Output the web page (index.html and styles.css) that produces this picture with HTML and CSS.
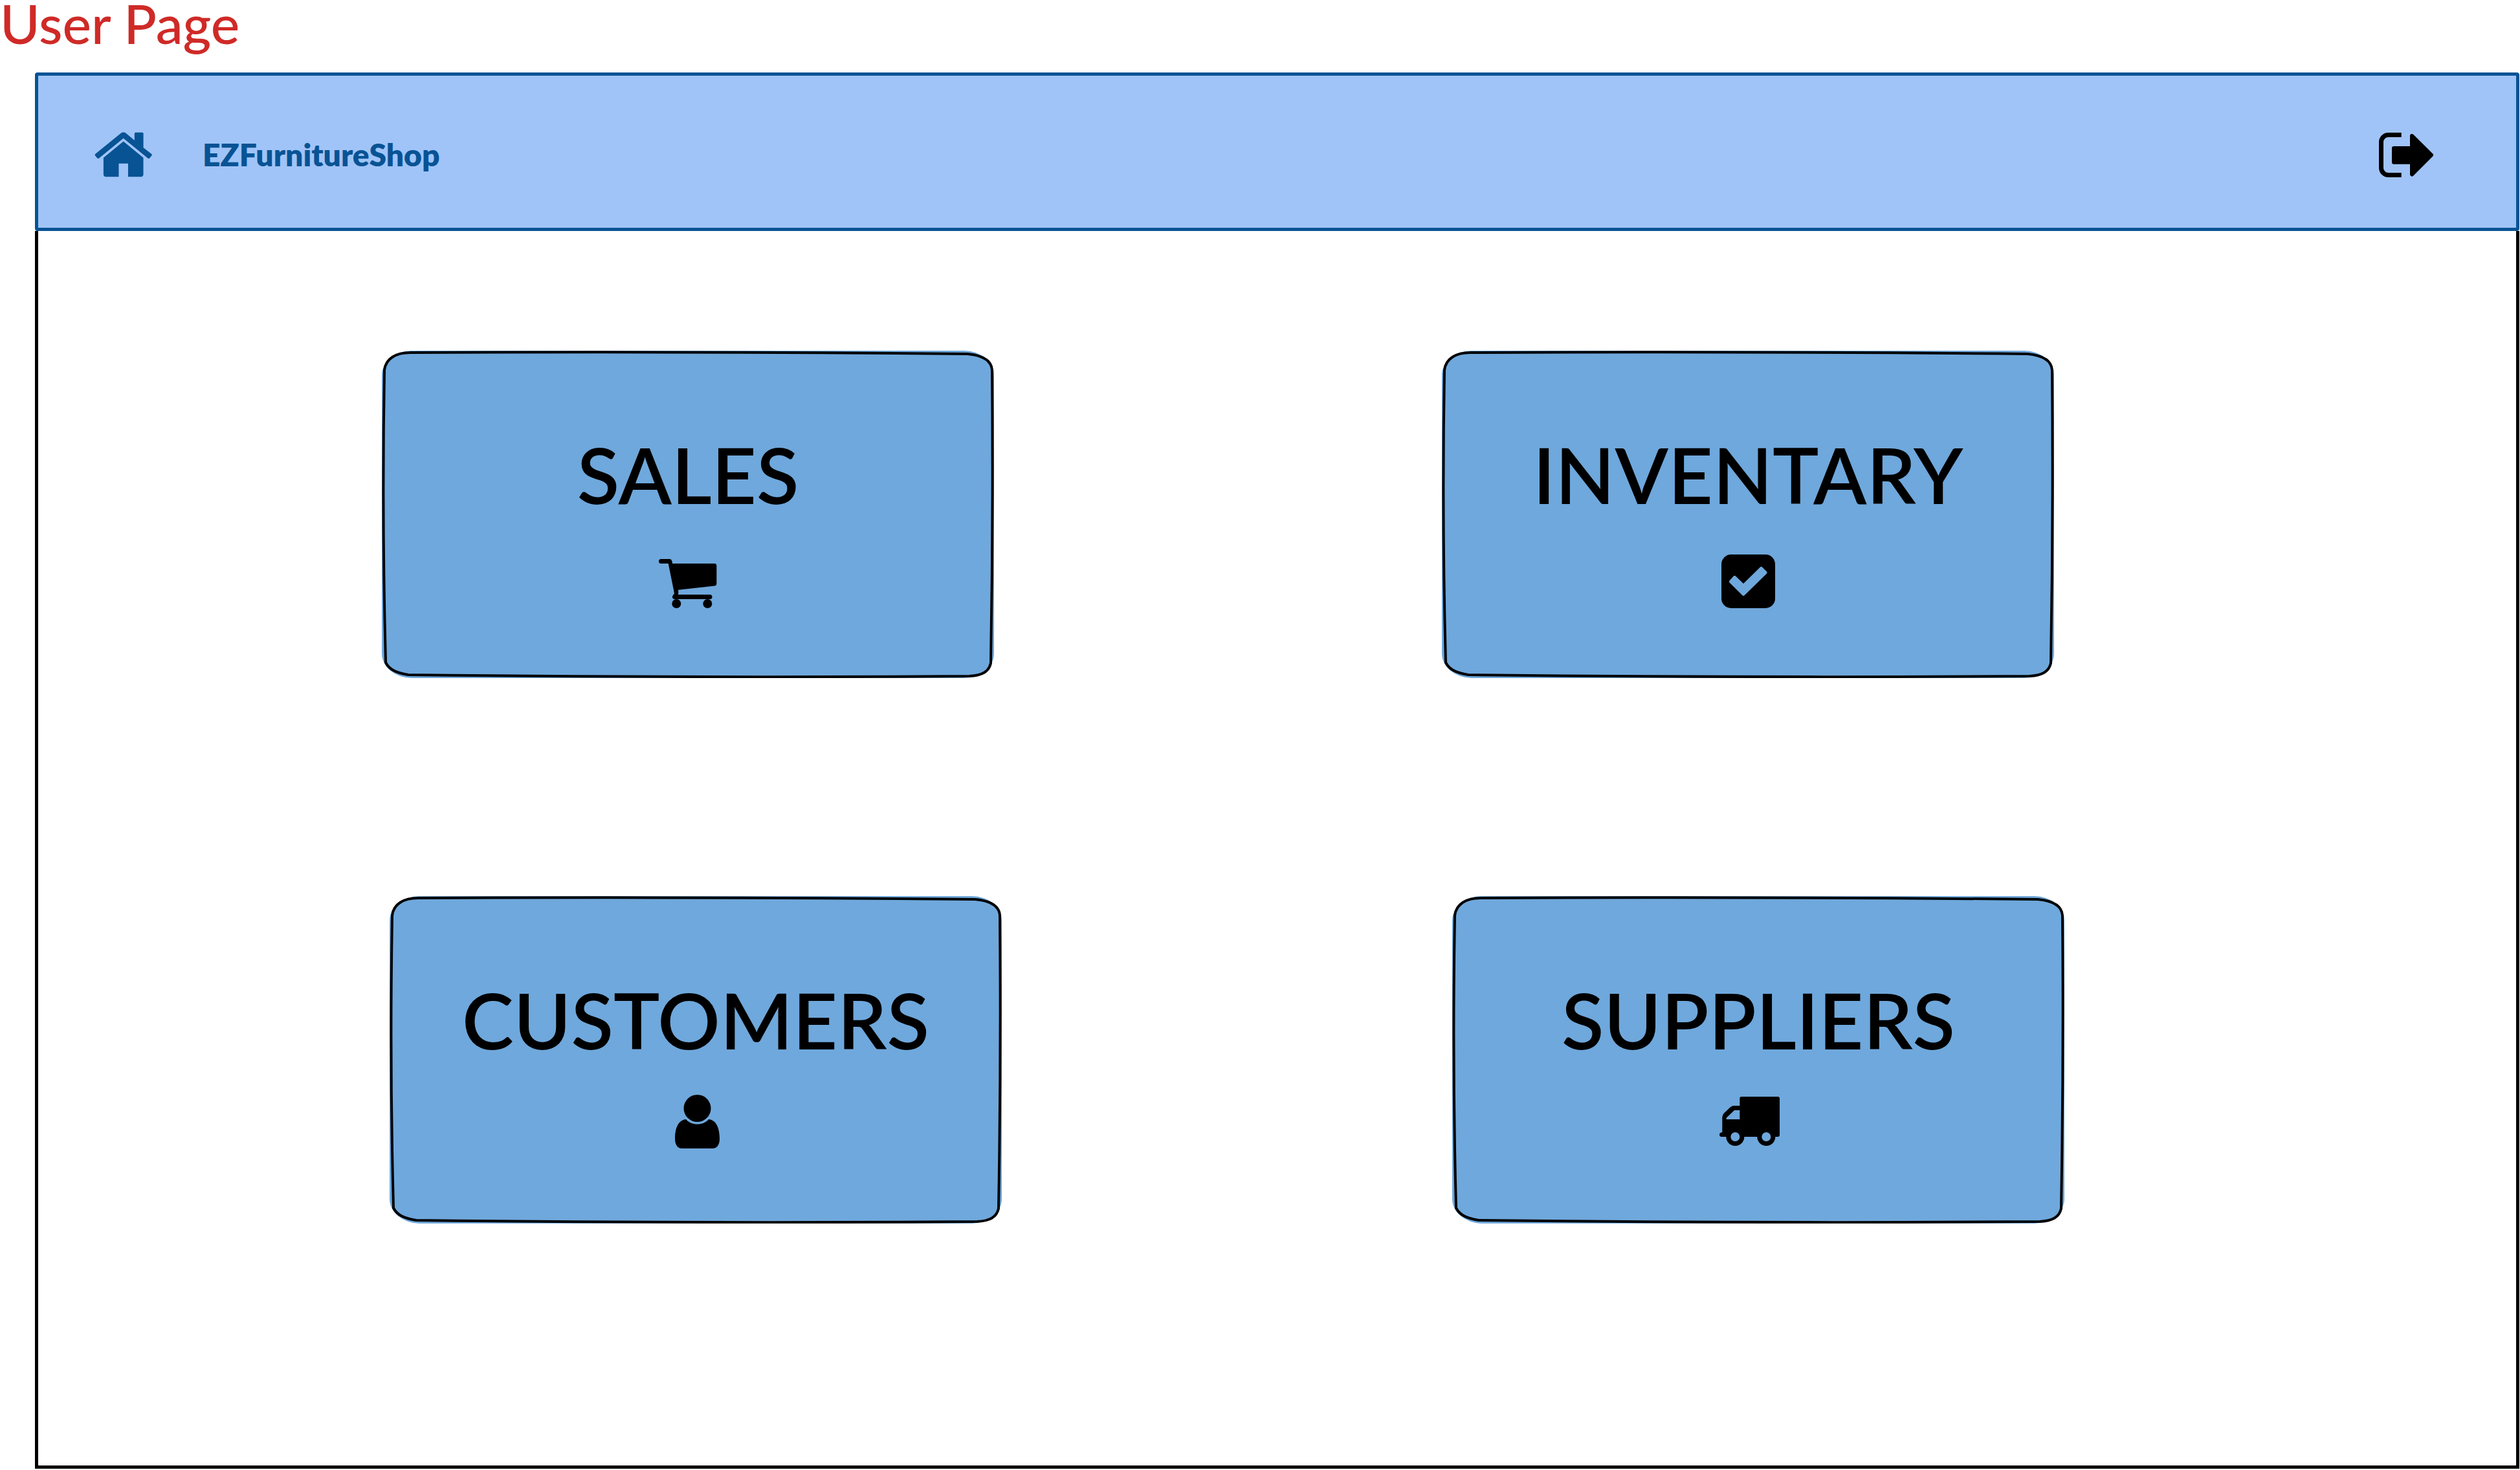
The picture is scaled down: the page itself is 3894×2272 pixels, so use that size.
FILE: index.html
```html
<!DOCTYPE html>
<html lang="en">
<head>
<meta charset="utf-8">
<title>User Page</title>
<link rel="stylesheet" href="styles.css">
</head>
<body>
<svg class="defs" aria-hidden="true">
  <symbol id="sketch-card" viewBox="0 0 946 506" preserveAspectRatio="none">
    <rect class="sketch-fill" width="946" height="506" rx="46" ry="38"/>
    <path class="sketch-line" d="M44 3Q490 1 905 5C926 7 942 14 943 30Q945 258 941 483C938 496 928 502 908 503Q490 506 41 501C24 498 12 494 6 482Q0 258 4 30C6 12 22 3 44 3z"/>
  </symbol>
</svg>
<h1 class="page-title">User Page</h1>
<div class="frame">
  <header class="topbar">
    <a class="icon-link" href="#" aria-label="Home">
      <svg class="icon" viewBox="0 0 1792 1792"><path d="M1503 992v480q0 26-19 45t-45 19h-376v-384H793v384H417q-26 0-45-19t-19-45V992q0-1 .5-3t.5-3l574-474 574 474q1 2 1 6zM1743 923l-62 74q-8 9-21 11h-3q-13 0-21-7L928 424 220 1001q-12 8-24 7-13-2-21-11l-62-74q-8-10-7-23.500t11-21.500l735-599q32-26 76-26t76 26l244 204V288q0-14 9-23t23-9h192q14 0 23 9t9 23v408l236 182q10 8 11 21.500t-7 23.500z"/></svg>
    </a>
    <a class="brand" href="#">EZFurnitureShop</a>
    <button class="icon-link sign-out" type="button" aria-label="Sign out">
      <svg class="icon" viewBox="0 0 96 96"><path class="bracket" d="M40.7 17.5H20.5a11 11 0 0 0-11 11v40a11 11 0 0 0 11 11H40.7"/><path class="arrow" d="M29 38H57V19L87 48.7 57 78.5V59.7H29z"/></svg>
    </button>
  </header>
  <main class="content">
    <div class="row row-first">
      <a class="card" href="#">
        <svg class="card-shape" aria-hidden="true"><use href="#sketch-card"/></svg>
        <span class="card-label">SALES</span>
        <svg class="icon" viewBox="0 -8 96 96"><path d="M6.5 10H20q3.5 0 4 7H89q3.3 0 3.3 3.5V48q0 3-3 3.5L33 57.7q.8 4-.3 7.3H82a3.5 3.5 0 0 1 0 7H27.5a3.5 3.5 0 0 1-3.5-4.5L27 63 17.7 17H6.5a3.5 3.5 0 0 1 0-7z"/><circle cx="30.3" cy="79" r="7"/><circle cx="78.3" cy="79" r="7"/></svg>
      </a>
      <a class="card" href="#">
        <svg class="card-shape" aria-hidden="true"><use href="#sketch-card"/></svg>
        <span class="card-label">INVENTARY</span>
        <svg class="icon" viewBox="0 -8 96 96"><path fill-rule="evenodd" d="M22 3H75a15 15 0 0 1 15 15V71a15 15 0 0 1-15 15H22A15 15 0 0 1 7 71V18A15 15 0 0 1 22 3zM19.5 43.5Q18 45 19.5 46.5L39.5 66.3Q41 67.5 42.5 66.3L77 32.5Q78.5 31 77 29.5L70 22.5Q68.5 21 67 22.5L41 48 29 36.5Q27.3 35 25.7 36.5z"/></svg>
      </a>
    </div>
    <div class="row row-second">
      <a class="card" href="#">
        <svg class="card-shape" aria-hidden="true"><use href="#sketch-card"/></svg>
        <span class="card-label">CUSTOMERS</span>
        <svg class="icon" viewBox="0 0 96 96"><circle cx="50.5" cy="24" r="21"/><path d="M33 41C20 42 16 57 16 71 16 80 20 86 27 86H74c7 0 11-6 11-15C85 57 81 42 68 41 64 46 57 48.5 50.5 48.5S37 46 33 41z"/></svg>
      </a>
      <a class="card" href="#">
        <svg class="card-shape" aria-hidden="true"><use href="#sketch-card"/></svg>
        <span class="card-label">SUPPLIERS</span>
        <svg class="icon icon-wide" viewBox="0 0 124 96"><path fill-rule="evenodd" d="M36 6H92q3 0 3 3V65q0 3-3 3H5.5Q2 68 2 64.7T6.300 61V38Q6.3 34 9 31.5L18.5 22.5Q21 20 24 20H33.3V9Q33.3 6 36 6zM33.3 27H25L12.7 38.7V41H33.3z"/><circle cx="26.3" cy="68" r="14"/><circle cx="74.3" cy="68" r="14"/><circle class="hub" cx="26.3" cy="68" r="7"/><circle class="hub" cx="74.3" cy="68" r="7"/></svg>
      </a>
    </div>
  </main>
</div>
</body>
</html>
```
FILE: styles.css
```css
* { box-sizing: border-box; }

body {
  margin: 0;
  min-height: 100vh;
  padding: 0 1px 2px 0;
  display: flex;
  flex-direction: column;
  background: #fff;
  color: #000;
  font-family: Lato, "Open Sans", sans-serif;
}

a { color: inherit; text-decoration: none; }

.defs { position: absolute; width: 0; height: 0; }

.page-title {
  margin: 0;
  padding: 0 0 40px;
  color: #cf2a27;
  font-size: 84px;
  font-weight: 500;
  line-height: 72px;
}

.frame {
  flex: 1;
  display: flex;
  flex-direction: column;
  margin-left: 54px;
}

.topbar {
  display: flex;
  align-items: center;
  padding: 74px 122px 65px 82px;
  border: 5px solid #085394;
  border-radius: 4px;
  background: #a0c4f8;
  color: #085394;
}

.icon { display: block; width: 96px; height: 96px; fill: currentColor; }
.icon-wide { width: 124px; }

.icon-link { padding: 0; border: 0; background: none; color: inherit; }

.brand {
  margin-left: 76px;
  font-size: 48px;
  font-weight: 800;
  line-height: 64px;
}

.sign-out { margin-left: auto; color: #000; }

.bracket { fill: none; stroke: currentColor; stroke-width: 7; }
.arrow { stroke: currentColor; stroke-width: 6; stroke-linejoin: round; }

.content {
  flex: 1;
  display: flex;
  flex-direction: column;
  gap: 337px;
  padding: 185px 0;
  border: 5px solid #000;
  border-top: 0;
}

.row { display: grid; }
.row-first { grid-template-columns: 531fr 946fr 692fr 946fr 714fr; }
.row-second { grid-template-columns: 543fr 946fr 696fr 946fr 698fr; }

.card {
  position: relative;
  display: flex;
  flex-direction: column;
  align-items: center;
  gap: 41px;
  grid-column: 2;
  padding: 119px 0 106px;
}
.card + .card { grid-column: 4; }

.card-shape { position: absolute; inset: 0; width: 100%; height: 100%; }
.sketch-fill, .hub { fill: #6fa8dc; }
.sketch-line { fill: none; stroke: #000; stroke-width: 4; }

.card-label {
  position: relative;
  font-size: 120px;
  font-weight: 600;
  line-height: 144px;
}
.card .icon { position: relative; }
```
